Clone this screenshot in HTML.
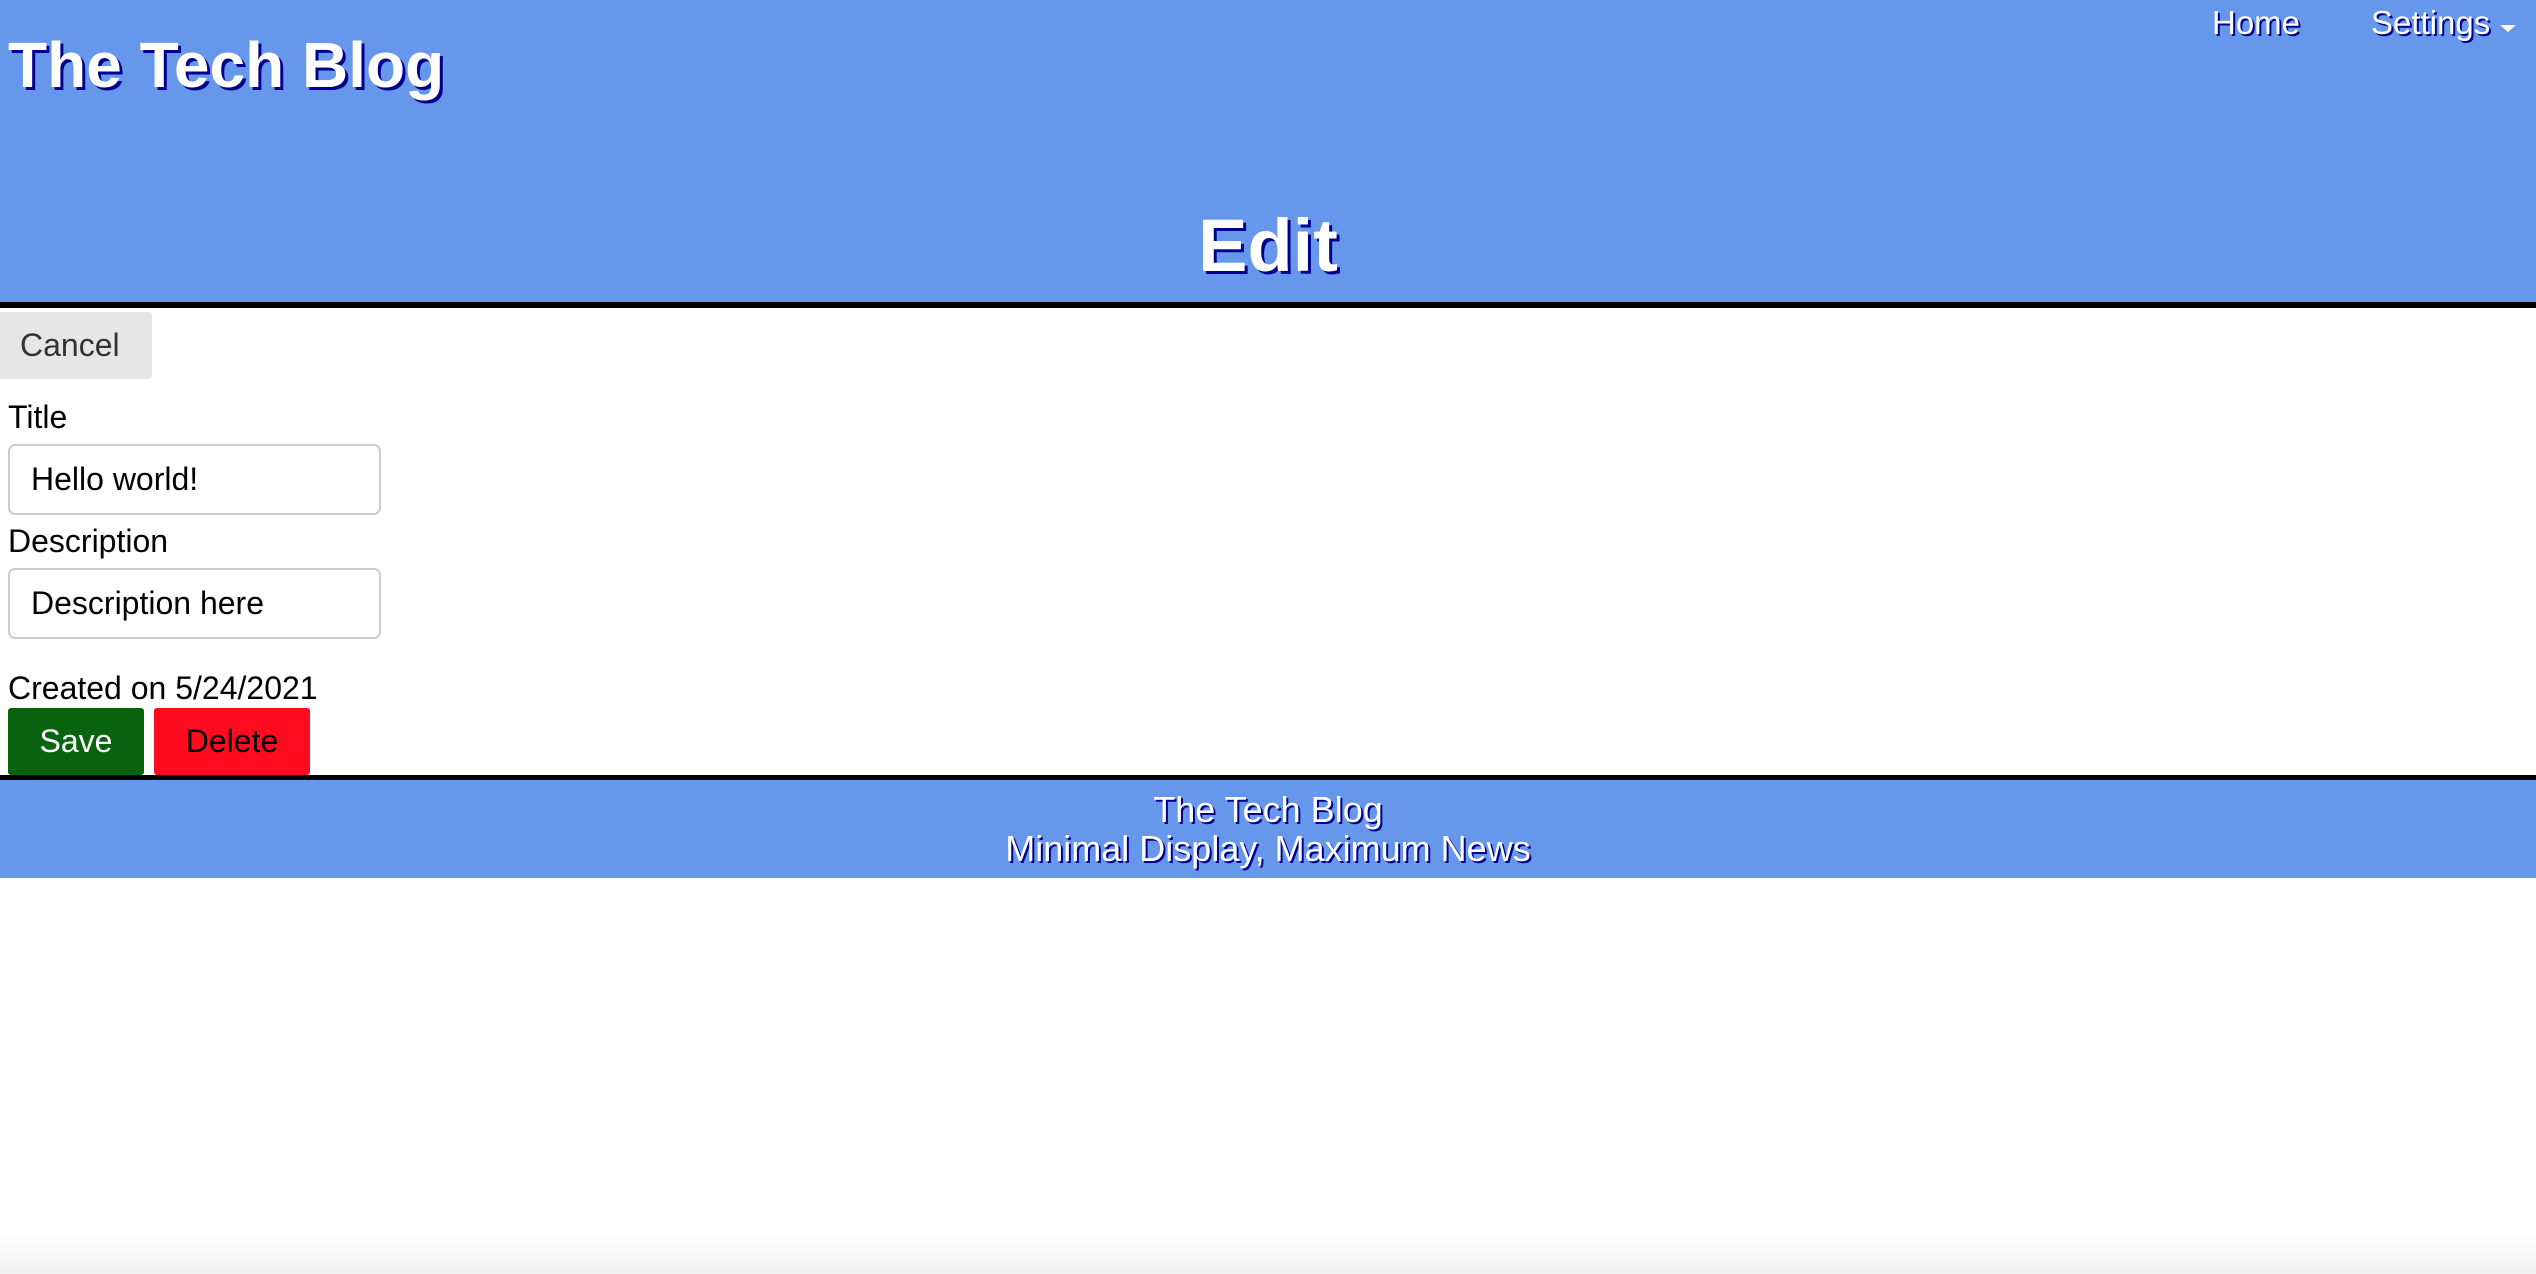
<!DOCTYPE html>
<html><head><meta charset="utf-8"><style>
*{box-sizing:border-box;margin:0;padding:0}
body{width:2536px;height:1274px;background:#fff;font-family:"Liberation Sans",Arial,sans-serif;position:relative;overflow:hidden}
.hdr{position:absolute;left:0;top:0;width:2536px;background:#6797ea;border-bottom:6px solid #000;height:308px}
.sh{color:#fff;text-shadow:3px 3px 0 #00008f}
.logo{position:absolute;left:8px;top:25px;font-size:64px;font-weight:bold;line-height:80px}
.edit{position:absolute;left:0;width:2536px;text-align:center;top:206px;font-size:74px;font-weight:bold;line-height:80px}
.nav{position:absolute;top:3px;font-size:33px;line-height:40px;text-shadow:2px 2px 0 #00008f;color:#fff}
.caret{position:absolute;left:2500px;top:25px;width:0;height:0;border-left:8px solid transparent;border-right:8px solid transparent;border-top:7px solid #fff}
.cancel{position:absolute;left:0;top:312px;width:152px;height:67px;background:#e6e6e6;border-radius:0 4px 4px 0;color:#333;font-size:32px;line-height:67px;padding-left:20px}
.lbl{position:absolute;left:8px;font-size:32px;line-height:36px;color:#000}
.inp{position:absolute;left:8px;width:373px;height:71px;border:2px solid #ccc;border-radius:7px;font-size:32px;line-height:67px;padding-left:21px;color:#000}
.btn{position:absolute;top:708px;height:67px;border-radius:3px;font-size:32px;line-height:67px;text-align:center}
.ftr{position:absolute;left:0;top:775px;width:2536px;height:103px;background:#6797ea;border-top:5px solid #000;text-align:center;font-size:36px;line-height:39px;padding-top:10px}
.fade{position:absolute;left:0;bottom:0;width:2536px;height:40px;background:linear-gradient(to bottom,rgba(0,0,0,0),rgba(0,0,0,0.06))}
</style></head><body>
<div class="hdr">
<div class="logo sh">The Tech Blog</div>
<div class="nav" style="left:2212px">Home</div>
<div class="nav" style="left:2371px">Settings</div>
<div class="caret"></div>
<div class="edit sh">Edit</div>
</div>
<div class="cancel">Cancel</div>
<div class="lbl" style="top:399px">Title</div>
<div class="inp" style="top:444px">Hello world!</div>
<div class="lbl" style="top:523px">Description</div>
<div class="inp" style="top:568px">Description here</div>
<div class="lbl" style="top:670px">Created on 5/24/2021</div>
<div class="btn" style="left:8px;width:136px;background:#0a640f;color:#fff">Save</div>
<div class="btn" style="left:154px;width:156px;background:#ff0a1e;color:#000">Delete</div>
<div class="ftr"><div class="sh" style="text-shadow:2px 2px 0 #00008f">The Tech Blog</div><div class="sh" style="text-shadow:2px 2px 0 #00008f">Minimal Display, Maximum News</div></div>
<div class="fade"></div>
</body></html>
